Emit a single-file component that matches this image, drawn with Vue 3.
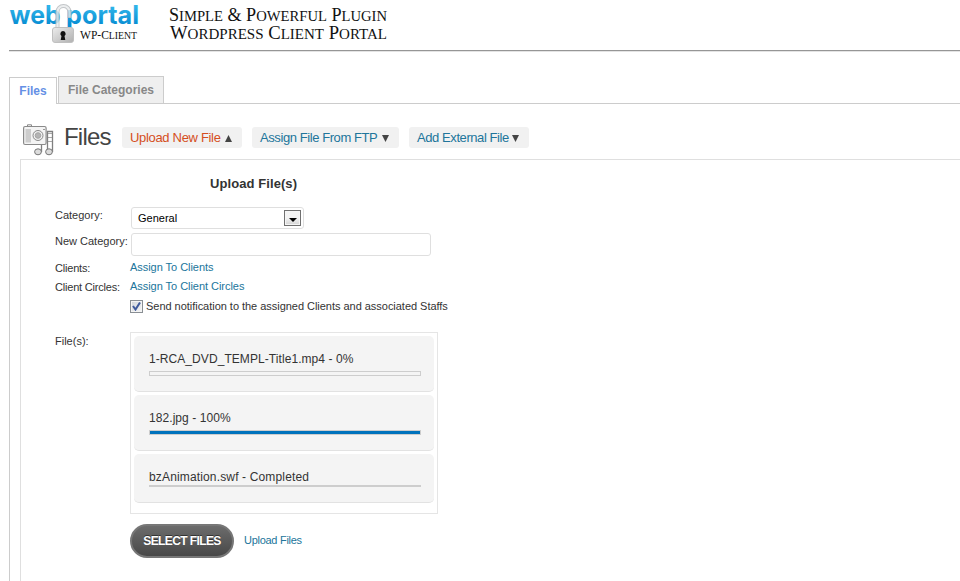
<script setup>
const actions = [
  { label: 'Upload New File', active: true, width: 120 },
  { label: 'Assign File From FTP', active: false, width: 147 },
  { label: 'Add External File', active: false, width: 120 },
]
const uploads = [
  { name: '1-RCA_DVD_TEMPL-Title1.mp4', status: '0%', progress: 0, done: false },
  { name: '182.jpg', status: '100%', progress: 100, done: false },
  { name: 'bzAnimation.swf', status: 'Completed', progress: 0, done: true },
]
</script>

<template>
  <div class="page">
    <header class="header">
      <svg class="brand" width="391" height="50" viewBox="0 0 391 50">
        <defs>
          <linearGradient id="sky" x1="0" y1="0" x2="0" y2="1">
            <stop offset="0.25" stop-color="#2fb4e9" />
            <stop offset="0.8" stop-color="#0a90d4" />
          </linearGradient>
          <linearGradient id="steel" x1="0" y1="0" x2="1" y2="1">
            <stop offset="0" stop-color="#ededed" />
            <stop offset="1" stop-color="#b0b0b0" />
          </linearGradient>
        </defs>
        <text x="0.500" y="24" class="logo" fill="url(#sky)" textLength="51" lengthAdjust="spacingAndGlyphs">web</text>
        <text x="57" y="24" class="logo" fill="url(#sky)" textLength="73" lengthAdjust="spacingAndGlyphs">portal</text>
        <g fill="none" opacity="0.8">
          <path d="M48.500 28V12a6 6 0 0 1 12 0v6" stroke="#b4b8bb" stroke-width="4" />
          <path d="M48.500 28V12a6 6 0 0 1 12 0v5.500" stroke="#e8ebec" stroke-width="2.200" />
        </g>
        <rect x="43.500" y="27.500" width="21" height="15" rx="2.500" fill="url(#steel)" stroke="#c0c0c0" />
        <path d="M54 31a2.700 2.700 0 0 1 1.500 4.900l.8 4.100h-4.600l.8-4.100A2.700 2.700 0 0 1 54 31z" fill="#111" />
        <text x="71" y="39" class="caps client" textLength="57" lengthAdjust="spacingAndGlyphs">WP-C<tspan class="sm">lient</tspan></text>
        <text x="160" y="21" class="caps" textLength="218" lengthAdjust="spacingAndGlyphs">S<tspan class="sm">imple</tspan> &amp; P<tspan class="sm">owerful</tspan> P<tspan class="sm">lugin</tspan></text>
        <text x="161" y="39" class="caps" textLength="217" lengthAdjust="spacingAndGlyphs">W<tspan class="sm">ordpress</tspan> C<tspan class="sm">lient</tspan> P<tspan class="sm">ortal</tspan></text>
      </svg>
    </header>

    <nav class="tabs">
      <a class="tab current">Files</a>
      <a class="tab">File Categories</a>
    </nav>

    <main class="content">
      <div class="title-row">
        <svg class="media" width="32" height="32" viewBox="0 0 32 32">
          <g fill="none" stroke="#777">
            <path d="M24 9.500h5M24 13.500h5M24 17.500h5" stroke="#aaa" />
            <path d="M18.500 28V20.500M29.500 28V7.500h-5V27" stroke="#808080" stroke-width="1.300" />
            <ellipse cx="15" cy="27.800" rx="3.400" ry="3" fill="#dcdcdc" />
            <ellipse cx="26" cy="27.800" rx="3.400" ry="3" fill="#dcdcdc" />
            <path d="M4.500 2.500V.8h4v1.700" stroke="#888" />
            <rect x="0.600" y="2.500" width="22.500" height="18" rx="1.500" fill="#f4f4f4" stroke="#8a8a8a" stroke-width="1.200" />
            <path d="M2.500 5h5.500v13.500H2.500z" fill="#cdcdcd" stroke="none" />
            <circle cx="15" cy="11.500" r="5" fill="#f0f0f0" stroke="#8a8a8a" />
            <circle cx="15" cy="11.500" r="2.800" fill="#b4b4b4" stroke="#a5a5a5" />
            <path d="M20 5.500h2" stroke="#999" />
          </g>
        </svg>
        <h1 class="title">Files</h1>
        <div class="actions">
          <a v-for="a in actions" :key="a.label" class="action" :class="{ active: a.active }" :style="{ width: a.width + 'px' }">
            <span>{{ a.label }}</span>
            <svg class="arrow" width="7" height="7" viewBox="0 0 7 7">
              <path :d="a.active ? 'M3.500 0L7 7H0z' : 'M0 0h7L3.500 7z'" />
            </svg>
          </a>
        </div>
      </div>

      <section class="panel">
        <h2 class="heading">Upload File(s)</h2>
        <div class="row field">
          <span class="label lift">Category:</span>
          <div class="select">
            <span>General</span>
            <span class="drop">
              <svg width="8" height="4" viewBox="0 0 8 4"><path d="M0 0h8L4 4z" /></svg>
            </span>
          </div>
        </div>
        <div class="row field">
          <span class="label lift">New Category:</span>
          <div class="input"></div>
        </div>
        <div class="row line">
          <span class="label clients">Clients:</span>
          <a class="link">Assign To Clients</a>
        </div>
        <div class="row line">
          <span class="label clients">Client Circles:</span>
          <a class="link">Assign To Client Circles</a>
        </div>
        <div class="row notify">
          <span class="label"></span>
          <span class="check">
            <svg width="9" height="9" viewBox="0 0 9 9"><path d="M1 4l2.500 3.500L8 0.500" /></svg>
          </span>
          <span class="notice">Send notification to the assigned Clients and associated Staffs</span>
        </div>
        <div class="row files">
          <span class="label file-label">File(s):</span>
          <div class="queue">
            <div v-for="u in uploads" :key="u.name" class="item" :class="{ done: u.done }">
              <div class="name">{{ u.name }} - {{ u.status }}</div>
              <div class="bar"><div v-if="!u.done" class="fill" :style="{ width: u.progress + '%' }"></div></div>
            </div>
          </div>
        </div>
        <div class="row buttons">
          <span class="label"></span>
          <button class="pick">SELECT FILES</button>
          <a class="link upload">Upload Files</a>
        </div>
      </section>
    </main>
  </div>
</template>

<style>
body { margin: 0; background: #fff; overflow: hidden; }
</style>

<style scoped>
.page {
  box-sizing: border-box;
  height: 581px;
  padding-left: 9px;
  display: flex;
  flex-direction: column;
  overflow: hidden;
  font-family: "Liberation Sans", Arial, sans-serif;
  font-size: 11px;
  color: #333;
}
.header {
  height: 50px;
  flex: none;
  border-bottom: 1px solid #969696;
  box-shadow: 0 1px 0 #e4e4e4;
}
.brand { display: block; overflow: visible; }
.logo { font: 700 25.5px Inter, sans-serif; }
.caps { font: 18px "Liberation Serif", serif; fill: #111; }
.sm { font-size: 14.5px; text-transform: uppercase; }
.client { font-size: 13px; }
.client .sm { font-size: 11px; }
.tabs {
  margin-top: 25px;
  height: 28px;
  flex: none;
  display: flex;
  align-items: flex-end;
  gap: 1px;
  box-shadow: inset 0 -1px 0 #ccc;
}
.tab {
  box-sizing: border-box;
  width: 106px;
  height: 28px;
  border: 1px solid #ccc;
  background: #efefef;
  color: #888;
  font-size: 12px;
  font-weight: 700;
  line-height: 26px;
  text-align: center;
}
.tab.current {
  width: 48px;
  height: 27px;
  border-bottom: 0;
  background: #fff;
  color: #6590e5;
}
.content {
  flex: 1;
  border-left: 1px solid #ccc;
  padding-left: 10px;
  display: flex;
  flex-direction: column;
}
.title-row {
  height: 55px;
  flex: none;
  display: flex;
  align-items: center;
  padding-left: 3px;
  box-sizing: border-box;
}
.media { margin-top: 17px; }
.title {
  margin: 11px 0 0 9px;
  width: 58px;
  font-size: 24px;
  line-height: 30px;
  font-weight: 400;
  letter-spacing: -0.8px;
  color: #444;
}
.actions { display: flex; gap: 10px; margin-top: 12px; }
.action {
  box-sizing: border-box;
  height: 21px;
  border-radius: 3px;
  background: #f1f1f1;
  padding: 0 8px;
  display: flex;
  align-items: center;
  justify-content: space-between;
  font-size: 13px;
  letter-spacing: -0.42px;
  color: #21759b;
  white-space: nowrap;
}
.action.active { color: #d54e21; letter-spacing: -0.32px; }
.arrow { flex: none; fill: #444; margin-top: 1px; margin-right: 2px; }
.panel {
  flex: 1;
  border: 1px solid #dfdfdf;
  border-right: 0;
  border-bottom: 0;
  padding-left: 34px;
  display: flex;
  flex-direction: column;
}
.heading {
  margin: 14px 0 12px 155px;
  height: 19px;
  font-size: 13px;
  line-height: 19px;
  font-weight: 700;
  letter-spacing: 0.08px;
}
.row { display: flex; align-items: center; flex: none; white-space: nowrap; }
.label { width: 75px; flex: none; }
.field { height: 26px; }
.lift { padding-bottom: 6px; width: 76px; }
.select, .input {
  box-sizing: border-box;
  height: 22px;
  width: 173px;
  border: 1px solid #dfdfdf;
  border-radius: 3px;
  background: #fff;
}
.select {
  padding: 0 2px 0 6px;
  display: flex;
  align-items: center;
  justify-content: space-between;
  color: #000;
}
.drop {
  box-sizing: border-box;
  width: 17px;
  height: 16px;
  border: 1px solid #707070;
  background: linear-gradient(#f3f3f3 50%, #d4d4d4);
  box-shadow: inset 0 0 0 1px #f5f5f5;
  display: flex;
  align-items: center;
  justify-content: center;
  padding-top: 3px;
}
.input { width: 300px; height: 23px; }
.line { height: 19px; }
.clients { padding-top: 2px; letter-spacing: -0.2px; }
.link { color: #21759b; letter-spacing: -0.04px; }
.upload { letter-spacing: -0.28px; margin-top: -2px; }
.notify { height: 22px; }
.check {
  box-sizing: border-box;
  width: 13px;
  height: 13px;
  border: 1px solid #8a8f94;
  background: linear-gradient(135deg, #cfd4da, #f6f6f6);
  box-shadow: inset 0 0 0 1px #f4f4f4;
  display: flex;
  align-items: center;
  justify-content: center;
}
.check path { fill: none; stroke: #3f5a9c; stroke-width: 2; }
.notice { margin-left: 3px; letter-spacing: -0.03px; }
.files { margin-top: 15px; align-items: flex-start; }
.file-label { padding-top: 3px; }
.queue {
  box-sizing: border-box;
  width: 308px;
  height: 182px;
  border: 1px solid #e5e5e5;
  padding: 3px;
  display: flex;
  flex-direction: column;
  gap: 3px;
}
.item {
  box-sizing: border-box;
  height: 56px;
  border-radius: 5px;
  border-bottom: 1px solid #e2e2e2;
  background: #f4f4f4;
  padding: 15px 13px 0 15px;
  font-size: 12px;
}
.item.done { height: 49px; }
.name { height: 20px; line-height: 16px; letter-spacing: 0.07px; }
.bar {
  box-sizing: border-box;
  height: 5px;
  border: 1px solid #cdcdcd;
}
.done .name { height: 16px; letter-spacing: 0.15px; }
.done .bar { height: 2px; }
.fill { height: 3px; background: #0072bc; }
.buttons { margin-top: 10px; height: 34px; }
.pick {
  box-sizing: border-box;
  width: 104px;
  height: 34px;
  margin: 0 10px 0 0;
  padding: 0;
  border: 2px solid #777;
  border-radius: 17px;
  background: linear-gradient(#6c6c6c, #484848);
  color: #fff;
  font: 700 12px "Liberation Sans", Arial, sans-serif;
  letter-spacing: -0.6px;
  text-shadow: 0 -1px 0 #333;
}
</style>
